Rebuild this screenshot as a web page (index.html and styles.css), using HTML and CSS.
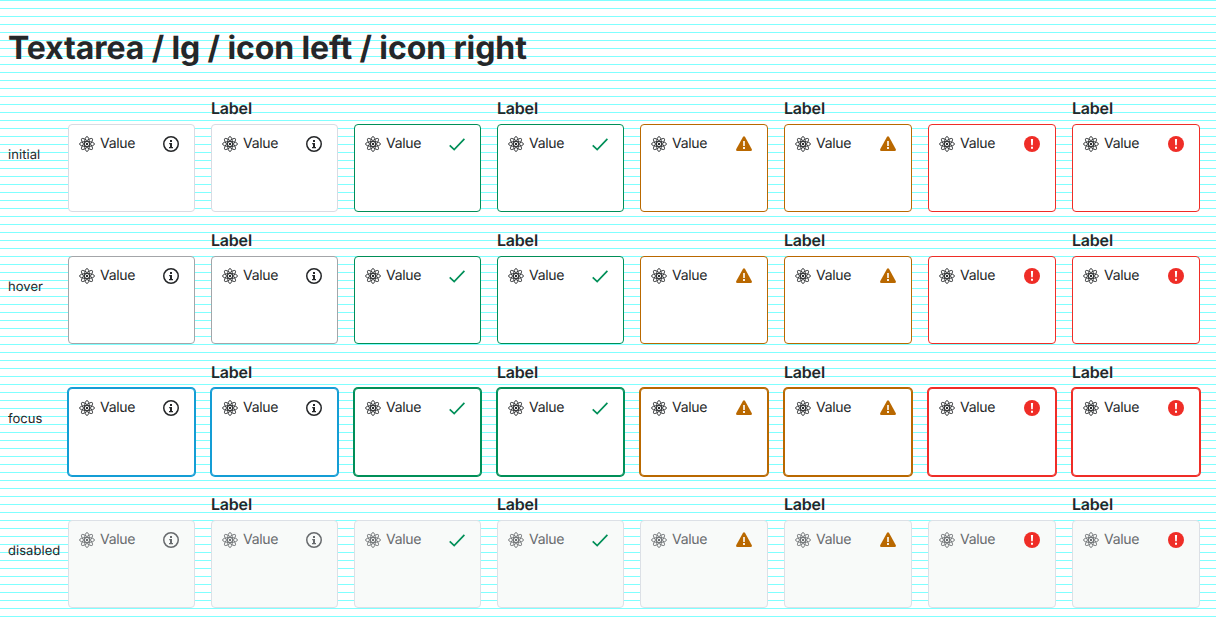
FILE: index.html
```
<!DOCTYPE html>
<html lang="en">
<head>
<meta charset="utf-8">
<title>Textarea / lg / icon left / icon right</title>
<link rel="stylesheet" href="styles.css">
</head>
<body>
<svg class="sprite" aria-hidden="true">
  <symbol id="atom" viewBox="0 0 16 16">
    <g fill="none" stroke="currentColor" stroke-width=".85">
      <ellipse cx="8" cy="8" rx="7.5" ry="2.5"/>
      <ellipse cx="8" cy="8" rx="7.5" ry="2.5" transform="rotate(45 8 8)"/>
      <ellipse cx="8" cy="8" rx="7.5" ry="2.5" transform="rotate(90 8 8)"/>
      <ellipse cx="8" cy="8" rx="7.5" ry="2.5" transform="rotate(135 8 8)"/>
    </g>
    <circle cx="8" cy="8" r="1.200" fill="currentColor"/>
  </symbol>
  <symbol id="info" viewBox="0 0 16 16">
    <circle cx="8" cy="8" r="7.25" fill="none" stroke="currentColor" stroke-width="1.5"/>
    <path fill="currentColor" d="M7 4h2v2H7zM6.2 7H9v4h1v1.2H6V11h1V8.200h-.8z"/>
  </symbol>
  <symbol id="check" viewBox="0 0 16 16">
    <path fill="none" stroke="currentColor" stroke-width="1.7" d="M.7 9.300 5.200 13.600 15.400 2.900"/>
  </symbol>
  <symbol id="warning" viewBox="0 0 16 16">
    <path fill="currentColor" d="M6.900 1.100Q8-.6 9.100 1.100L15.700 13Q16.500 15 14.600 15H1.400Q-.5 15 .3 13z"/>
    <path fill="#fff" d="M7.200 5h1.600v5H7.200zM7.100 11.100h1.800v1.800H7.100z"/>
  </symbol>
  <symbol id="error" viewBox="0 0 16 16">
    <circle cx="8" cy="8" r="8" fill="currentColor"/>
    <path fill="#fff" d="M6.900 3h2.200l-.3 6.200H7.200zM7 10.700h2v2H7z"/>
  </symbol>
</svg>
<h1 class="title">Textarea / lg / icon left / icon right</h1>
<main class="states" id="states"></main>
<script src="states.js"></script>
</body>
</html>
```
FILE: styles.css
```
* { box-sizing: border-box; }
body {
  margin: 0;
  padding: 0 8px;
  height: 624px;
  overflow: hidden;
  font-family: Inter, sans-serif;
  text-rendering: geometricPrecision;
  color: #252729;
  background: repeating-linear-gradient(to bottom, #80ffff 0, #80ffff 1px, #fff 1px, #fff 8px);
}
.sprite { position: absolute; width: 0; height: 0; }
.title { margin: 0; padding-top: 28px; height: 96px; font-size: 32px; line-height: 40px; font-weight: 700; letter-spacing: -.1px; }
.state {
  display: grid;
  grid-template-columns: 44px repeat(4, 127px) repeat(4, 128px);
  column-gap: 16px;
  height: 132px;
}
.state-name { padding-top: 49px; font-size: 13px; line-height: 20px; white-space: nowrap; letter-spacing: .05px; }
.field { display: flex; flex-direction: column; }
.label { height: 28px; font-size: 16px; line-height: 24px; font-weight: 600; letter-spacing: -.2px; }
.textarea {
  display: flex;
  align-items: flex-start;
  height: 88px;
  padding: 7px 15px 0 10px;
  border: 1px solid;
  border-radius: 4px;
  background: #fff;
}
.value { flex: 1; margin-left: 5px; font-size: 14px; line-height: 24px; letter-spacing: -.3px; }
.icon { flex: none; width: 16px; height: 16px; margin-top: 4px; }
.neutral .textarea { border-color: #d9dbe3; }
.success .textarea { border-color: #008f58; }
.warning .textarea { border-color: #b96800; }
.error .textarea { border-color: #ef2d27; }
.success .status { color: #008f58; }
.warning .status { color: #b96800; }
.error .status { color: #ef2d27; }
.state-focus .textarea { box-shadow: 0 0 0 1px var(--ring); }
.neutral { --ring: #149dd5; }
.success { --ring: #008f58; }
.warning { --ring: #b96800; }
.error { --ring: #ef2d27; }
.state-hover .neutral .textarea { border-color: #a3a6a9; }
.state-focus .neutral .textarea { border-color: #149dd5; }
.state-disabled .textarea { border-color: #dce0e6; background: #f8faf9; color: #686b6e; }
```
FILE: states.js
```
const fields = [
  ["neutral", "info"],
  ["success", "check"],
  ["warning", "warning"],
  ["error", "error"]
];
const field = (kind, icon, label) => `
  <div class="field ${kind}">
    <div class="label">${label}</div>
    <div class="textarea">
      <svg class="icon"><use href="#atom"/></svg>
      <span class="value">Value</span>
      <svg class="icon status"><use href="#${icon}"/></svg>
    </div>
  </div>`;
document.getElementById("states").innerHTML = ["initial", "hover", "focus", "disabled"].map(state => `
  <section class="state state-${state}">
    <div class="state-name">${state}</div>
    ${fields.map(([kind, icon]) => field(kind, icon, "") + field(kind, icon, "Label")).join("")}
  </section>`).join("");
```
